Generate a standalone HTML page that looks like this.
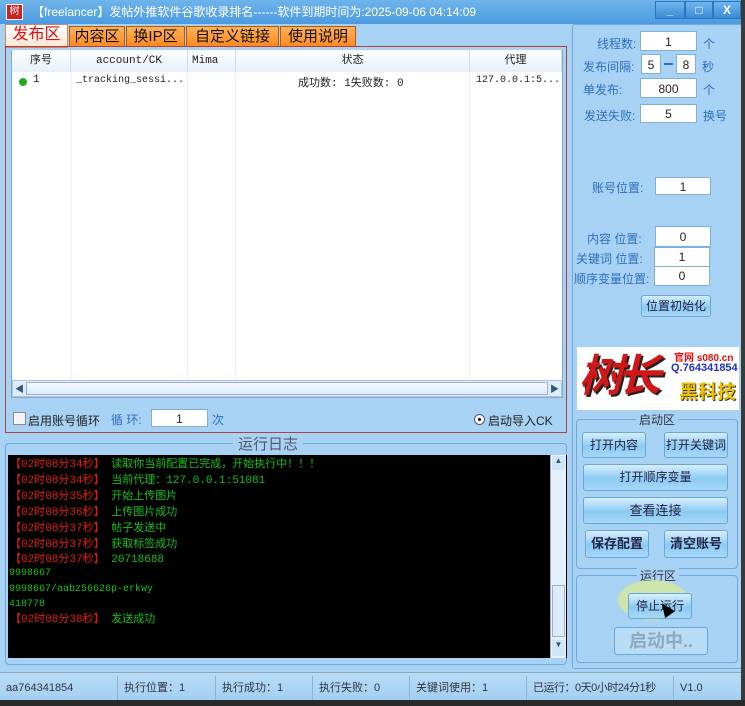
<!DOCTYPE html>
<html><head><meta charset="utf-8"><style>
*{margin:0;padding:0;box-sizing:border-box}
body{width:745px;height:706px;overflow:hidden;background:#a8d2f4;font-family:"Liberation Sans","Noto Sans CJK SC",sans-serif;font-size:12px;position:relative;color:#222}
.a{position:absolute;white-space:nowrap}
#title{left:0;top:0;width:745px;height:24px;background:linear-gradient(#6fb4ea,#4c9be0);color:#fff;font-size:13px;line-height:24px}
.wb{top:1px;height:18px;background:linear-gradient(#6fb6ee,#3a8ad6);border:1px solid #2f76c0;color:#fff;text-align:center;font-weight:bold;line-height:16px}
.tab{top:26px;height:21px;background:linear-gradient(#ffb25a,#ff8a1e);border:1px solid #b55a10;font-size:15px;line-height:19px;text-align:center;color:#111}
.inp{background:#fff;border:1px solid #7fb0d8;text-align:center;font-size:12px;line-height:18px}
.lbl{color:#2f6fc0;font-size:12px}
.btn{background:linear-gradient(#d7effd,#8ccaf3 55%,#a6d8f8);border:1px solid #6aa6d6;border-radius:3px;text-align:center;color:#224;font-size:12px}
.th{top:50px;height:22px;border-right:1px solid #c9dced;background:linear-gradient(#fff,#e6f0fa);text-align:center;line-height:22px;font-size:11px;font-family:"Liberation Mono","Noto Sans CJK SC",monospace}
.log{position:absolute;left:10px;font-size:11px;line-height:16px;font-family:"Liberation Mono","Noto Sans CJK SC",monospace;white-space:nowrap}
.r{color:#e02010}.g{color:#19c019}
.sb{top:676px;height:24px;line-height:24px;font-size:11px;color:#334;border-right:1px solid #8fb4d2;padding-left:6px;overflow:hidden}
</style></head><body>
<div id="title" class="a"><span class="a" style="left:6px;top:4px;width:17px;height:16px;background:#c22;border:1px solid #fff;font-size:10px;line-height:14px;text-align:center">树</span><span class="a" style="left:32px;top:0;font-size:12px">【freelancer】发帖外推软件谷歌收录排名------软件到期时间为:2025-09-06 04:14:09</span></div>
<div class="a wb" style="left:655px;width:30px">_</div><div class="a wb" style="left:685px;width:28px">□</div><div class="a wb" style="left:713px;width:28px">X</div>

<div class="a tab" style="left:5px;width:63px;top:24px;height:24px;background:linear-gradient(#fff,#ffe6d2);color:#e01010;font-size:16px;border-color:#c86">发布区</div>
<div class="a tab" style="left:69px;width:56px">内容区</div>
<div class="a tab" style="left:126px;width:59px">换IP区</div>
<div class="a tab" style="left:186px;width:93px">自定义链接</div>
<div class="a tab" style="left:280px;width:76px">使用说明</div>

<div class="a" style="left:5px;top:46px;width:562px;height:387px;border:1px solid #b04040"></div>
<div class="a" style="left:11px;top:50px;width:552px;height:348px;background:#fff;border:1px solid #8ab"></div>
<div class="a th" style="left:12px;width:59px">序号</div>
<div class="a th" style="left:71px;width:117px">account/CK</div>
<div class="a th" style="left:188px;width:48px;text-align:left;padding-left:4px">Mima</div>
<div class="a th" style="left:236px;width:234px">状态</div>
<div class="a th" style="left:470px;width:92px">代理</div>
<div class="a" style="left:71px;top:72px;width:1px;height:308px;background:#eef2f6"></div>
<div class="a" style="left:187px;top:72px;width:1px;height:308px;background:#eef2f6"></div>
<div class="a" style="left:235px;top:72px;width:1px;height:308px;background:#eef2f6"></div>
<div class="a" style="left:469px;top:72px;width:1px;height:308px;background:#eef2f6"></div>
<div class="a" style="left:19px;top:78px;width:8px;height:8px;border-radius:50%;background:#2a2"></div>
<div class="a" style="left:33px;top:74px;font-size:11px;font-family:'Liberation Mono',monospace">1</div>
<div class="a" style="left:76px;top:75px;font-size:10px;font-family:'Liberation Mono',monospace">_tracking_sessi...</div>
<div class="a" style="left:298px;top:74px;font-size:11px;font-family:'Liberation Mono','Noto Sans CJK SC',monospace">成功数: 1失败数: 0</div>
<div class="a" style="left:476px;top:75px;font-size:10px;font-family:'Liberation Mono',monospace">127.0.0.1:5...</div>
<div class="a" style="left:12px;top:380px;width:550px;height:17px;background:#dcecf8;border:1px solid #a8c8e0"><div class="a" style="left:13px;top:1px;width:522px;height:13px;background:linear-gradient(#f4faff,#d8ebf8);border:1px solid #aac"></div><span class="a" style="left:2px;top:1px;font-size:9px;color:#357">◀</span><span class="a" style="right:2px;top:1px;font-size:9px;color:#357">▶</span></div>

<div class="a" style="left:13px;top:412px;width:13px;height:13px;background:#f4f4f4;border:1px solid #889"></div>
<div class="a" style="left:28px;top:412px">启用账号循环</div>
<div class="a lbl" style="left:111px;top:411px">循 环:</div>
<div class="a inp" style="left:151px;top:409px;width:57px;height:18px">1</div>
<div class="a lbl" style="left:212px;top:411px">次</div>
<div class="a" style="left:474px;top:414px;width:11px;height:11px;border-radius:50%;border:1px solid #556;background:#fff"><div class="a" style="left:3px;top:3px;width:3px;height:3px;background:#000;border-radius:50%"></div></div>
<div class="a" style="left:488px;top:412px">启动导入CK</div>

<div class="a" style="left:5px;top:443px;width:562px;height:222px;border:1px solid #6fa8dc;border-radius:4px"></div>
<div class="a" style="left:233px;top:433px;background:#a8d2f4;padding:0 5px;font-size:15px;color:#556">运行日志</div>
<div class="a" style="left:8px;top:455px;width:559px;height:203px;background:#000"></div>
<div class="a" style="left:550px;top:455px;width:16px;height:203px;background:#e4f0fa;border-left:1px solid #aac"><div class="a" style="left:1px;top:1px;width:13px;height:14px;background:#cfe6f7;font-size:8px;text-align:center;color:#357">▲</div><div class="a" style="left:1px;top:185px;width:13px;height:16px;background:#cfe6f7;font-size:8px;text-align:center;color:#357">▼</div><div class="a" style="left:1px;top:130px;width:13px;height:52px;background:#d8ecfa;border:1px solid #aac"></div></div>
<div class="log" style="top:457px"><span class="r">【02时08分34秒】</span> <span class="g">读取你当前配置已完成，开始执行中！！！</span></div>
<div class="log" style="top:473px"><span class="r">【02时08分34秒】</span> <span class="g">当前代理：127.0.0.1:51081</span></div>
<div class="log" style="top:489px"><span class="r">【02时08分35秒】</span> <span class="g">开始上传图片</span></div>
<div class="log" style="top:505px"><span class="r">【02时08分36秒】</span> <span class="g">上传图片成功</span></div>
<div class="log" style="top:521px"><span class="r">【02时08分37秒】</span> <span class="g">帖子发送中</span></div>
<div class="log" style="top:537px"><span class="r">【02时08分37秒】</span> <span class="g">获取标签成功</span></div>
<div class="log" style="top:552px"><span class="r">【02时08分37秒】</span> <span class="g">20718688</span></div>
<div class="log g" style="top:566px;left:9px;font-size:10px">9998667</div>
<div class="log g" style="top:582px;left:9px;font-size:10px">9998667/aabz56626p-erkwy</div>
<div class="log g" style="top:597px;left:9px;font-size:10px">418778</div>
<div class="log" style="top:612px"><span class="r">【02时08分38秒】</span> <span class="g">发送成功</span></div>

<div class="a" style="left:572px;top:24px;width:170px;height:645px;border:1px solid #6fa8dc;border-radius:3px"></div>
<div class="a lbl" style="left:597px;top:35px">线程数:</div><div class="a inp" style="left:640px;top:31px;width:57px;height:20px;line-height:20px">1</div><div class="a lbl" style="left:703px;top:35px">个</div>
<div class="a lbl" style="left:583px;top:58px">发布间隔:</div><div class="a inp" style="left:641px;top:54px;width:20px;height:20px;line-height:20px">5</div><div class="a" style="left:664px;top:63px;width:9px;height:2px;background:#2f6fc0"></div><div class="a inp" style="left:676px;top:54px;width:20px;height:20px;line-height:20px">8</div><div class="a lbl" style="left:702px;top:58px">秒</div>
<div class="a lbl" style="left:583px;top:81px">单发布:</div><div class="a inp" style="left:640px;top:78px;width:57px;height:20px;line-height:20px">800</div><div class="a lbl" style="left:703px;top:81px">个</div>
<div class="a lbl" style="left:584px;top:107px">发送失败:</div><div class="a inp" style="left:640px;top:104px;width:57px;height:19px">5</div><div class="a lbl" style="left:703px;top:107px">换号</div>
<div class="a lbl" style="left:592px;top:179px">账号位置:</div><div class="a inp" style="left:655px;top:177px;width:56px;height:18px">1</div>
<div class="a lbl" style="left:587px;top:230px">内容 位置:</div><div class="a inp" style="left:655px;top:226px;width:56px;height:21px;line-height:20px">0</div>
<div class="a lbl" style="left:576px;top:250px">关键词 位置:</div><div class="a inp" style="left:654px;top:247px;width:56px;height:20px">1</div>
<div class="a lbl" style="left:574px;top:270px">顺序变量位置:</div><div class="a inp" style="left:654px;top:266px;width:56px;height:20px">0</div>
<div class="a btn" style="left:641px;top:295px;width:70px;height:22px;line-height:20px">位置初始化</div>

<div class="a" style="left:577px;top:347px;width:162px;height:63px;background:#fff;overflow:hidden">
<div class="a" style="left:2px;top:2px;font-size:44px;font-weight:bold;color:#d01818;line-height:56px;font-style:italic;letter-spacing:-6px;text-shadow:2px 2px 0 #222">树长</div>
<div class="a" style="left:97px;top:2px;color:#e01010;font-size:10px;font-weight:bold">官网 s080.cn</div>
<div class="a" style="left:94px;top:15px;color:#2030c0;font-size:11px;font-weight:bold">Q.764341854</div>
<div class="a" style="left:102px;top:30px;color:#f0c000;font-size:19px;font-weight:bold;text-shadow:1px 1px 0 #333">黑科技</div>
</div>

<div class="a" style="left:576px;top:419px;width:162px;height:150px;border:1px solid #6fa8dc;border-radius:4px"></div>
<div class="a" style="left:636px;top:411px;background:#a8d2f4;padding:0 3px;color:#334">启动区</div>
<div class="a btn" style="left:582px;top:432px;width:64px;height:26px;line-height:24px">打开内容</div>
<div class="a btn" style="left:664px;top:432px;width:64px;height:26px;line-height:24px">打开关键词</div>
<div class="a btn" style="left:583px;top:464px;width:145px;height:27px;line-height:25px">打开顺序变量</div>
<div class="a btn" style="left:583px;top:497px;width:145px;height:27px;line-height:25px;font-size:13px">查看连接</div>
<div class="a btn" style="left:585px;top:530px;width:64px;height:28px;line-height:26px;font-weight:bold;font-size:13px">保存配置</div>
<div class="a btn" style="left:664px;top:530px;width:64px;height:28px;line-height:26px;font-weight:bold;font-size:13px">清空账号</div>

<div class="a" style="left:576px;top:575px;width:162px;height:88px;border:1px solid #6fa8dc;border-radius:4px"></div>
<div class="a" style="left:637px;top:567px;background:#a8d2f4;padding:0 3px;color:#334">运行区</div>
<div class="a" style="left:618px;top:580px;width:70px;height:40px;border-radius:50%;background:#d6e89a;opacity:.8"></div>
<div class="a btn" style="left:628px;top:593px;width:64px;height:26px;line-height:24px">停止运行</div>
<div class="a" style="left:660px;top:602px;width:0;height:0;border-left:6px solid transparent;border-right:6px solid transparent;border-bottom:14px solid #000;transform:rotate(-35deg)"></div>
<div class="a btn" style="left:614px;top:627px;width:94px;height:28px;line-height:26px;font-size:18px;font-weight:bold;color:#8fa8bc;background:#b8dcf6">启动中..</div>

<div class="a" style="left:0;top:672px;width:745px;height:28px;background:linear-gradient(#b8dcf6,#a4cff1);border-top:1px solid #8ab"></div>
<div class="a sb" style="left:0;width:118px">aa764341854</div>
<div class="a sb" style="left:118px;width:98px">执行位置：1</div>
<div class="a sb" style="left:216px;width:97px">执行成功：1</div>
<div class="a sb" style="left:313px;width:97px">执行失败：0</div>
<div class="a sb" style="left:410px;width:117px">关键词使用：1</div>
<div class="a sb" style="left:527px;width:147px;letter-spacing:-0.5px">已运行：0天0小时24分1秒</div>
<div class="a sb" style="left:674px;width:60px;border:none">V1.0</div>
<div class="a" style="left:0;top:700px;width:745px;height:6px;background:#2a2a2a"></div>
<div class="a" style="left:741px;top:0;width:4px;height:700px;background:#3a3a3a"></div>
</body></html>
